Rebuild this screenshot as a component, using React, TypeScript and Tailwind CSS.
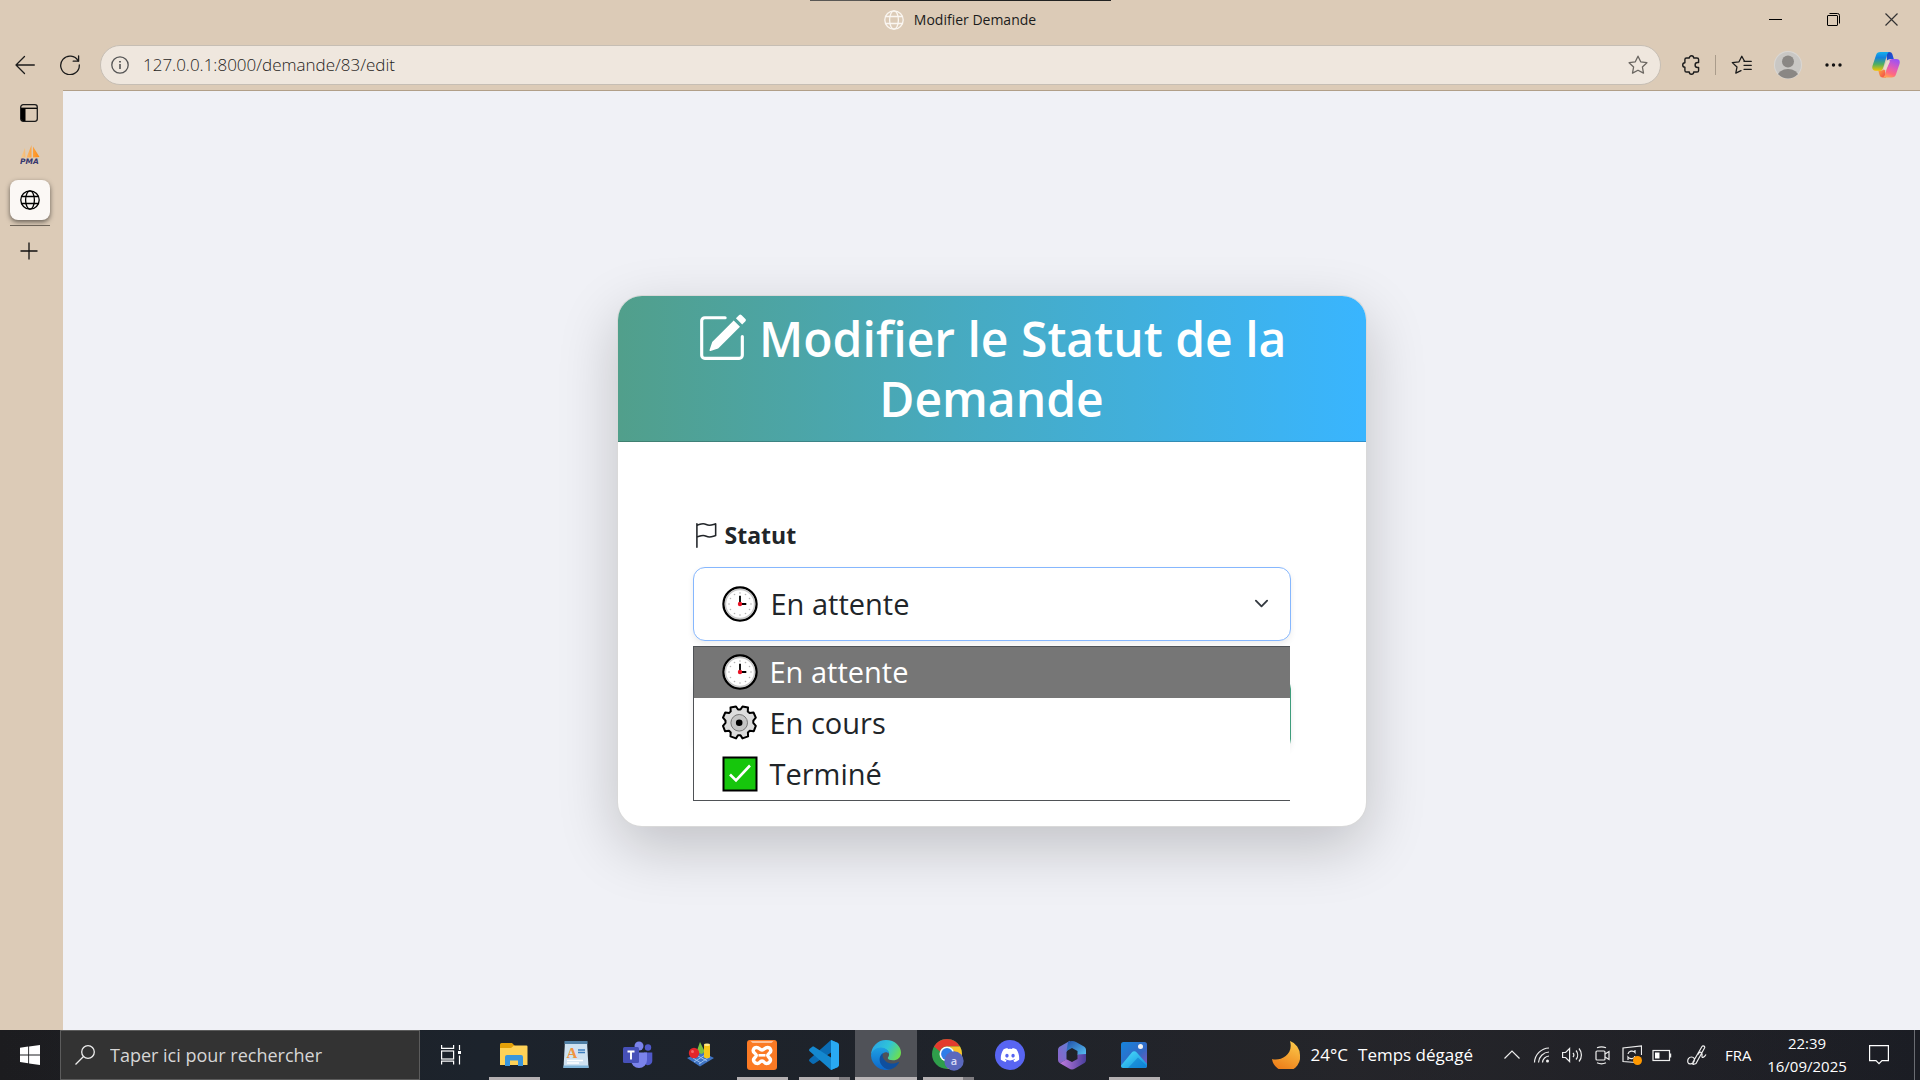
import type { ReactNode } from "react";
import { BsFlag, BsPencilSquare } from "react-icons/bs";
import { FaDiscord } from "react-icons/fa";

/* ---------- Browser icons ---------- */

function Globe({ className }: { className?: string }) {
  return (
    <svg viewBox="0 0 20 20" fill="none" stroke="currentColor" strokeWidth="1.3" className={className}>
      <circle cx="10" cy="10" r="9.2" />
      <ellipse cx="10" cy="10" rx="4.4" ry="9.2" />
      <path d="M1.5 6.5h17M1.5 13.5h17" />
    </svg>
  );
}

function BackIcon() {
  return (
    <svg viewBox="0 0 20 20" fill="none" stroke="#1b1b1b" strokeWidth="1.3" strokeLinecap="round" strokeLinejoin="round" className="size-5">
      <path d="M19.3 10H1M9.5 1.5 1 10l8.500 8.500" />
    </svg>
  );
}

function ReloadIcon() {
  return (
    <svg viewBox="0 0 20 20" fill="none" stroke="#1b1b1b" strokeWidth="1.3" strokeLinecap="round" strokeLinejoin="round" className="size-5">
      <path d="M18.2 6A9.300 9.300 0 1 0 19.300 10" />
      <path d="M18.600.8v5.400h-5.400" />
    </svg>
  );
}

function InfoIcon() {
  return (
    <svg viewBox="0 0 18 18" fill="none" stroke="#555" strokeWidth="1.3" className="size-[18px]">
      <circle cx="9" cy="9" r="8.200" />
      <path d="M9 8v5" strokeWidth="1.6" />
      <path d="M9 5v1.600" strokeWidth="1.800" />
    </svg>
  );
}

const STAR = "M10 1.200l2.700 5.600 6.200.9-4.500 4.300 1.100 6.100L10 15.200l-5.500 2.900 1.100-6.100L1.100 7.700l6.200-.9z";

function StarIcon() {
  return (
    <svg viewBox="0 0 20 20" fill="none" stroke="#6b6762" strokeWidth="1.300" strokeLinejoin="round" className="size-5">
      <path d={STAR} />
    </svg>
  );
}

function FavoritesIcon() {
  return (
    <svg viewBox="0 0 21 20" fill="none" stroke="#1b1b1b" strokeWidth="1.300" strokeLinejoin="round" strokeLinecap="round" className="h-5 w-[21px]">
      <path d="M13.500 6.300 10.800 1.200 8 6.800l-6.700.8 4.700 4.400-1.200 6.200 5.200-2.600" />
      <path d="M13 6.300h7.300M13 10.300h7.300M13 14.300h7.300" />
    </svg>
  );
}

function PuzzleIcon() {
  return (
    <svg viewBox="0 0 20 20" fill="none" stroke="#1b1b1b" strokeWidth="1.400" strokeLinejoin="round" className="size-5">
      <path d="M5.500 3H8.300a2.200 2.200 0 0 1 4.400 0H16a1.600 1.600 0 0 1 1.600 1.600V7.500h-1a2.500 2.500 0 0 0 0 5h1v2.900A1.600 1.600 0 0 1 16 17h-3.300a2.200 2.200 0 0 1-4.400 0H5.500A1.600 1.600 0 0 1 3.900 15.400v-3.200a2.200 2.200 0 0 1 0-4.400V4.600A1.600 1.600 0 0 1 5.500 3z" />
    </svg>
  );
}

function Avatar() {
  return (
    <svg viewBox="0 0 28 28" className="size-7">
      <defs>
        <clipPath id="avatarClip"><circle cx="14" cy="14" r="13.500" /></clipPath>
      </defs>
      <circle cx="14" cy="14" r="14" fill="#d9d7d4" />
      <circle cx="14" cy="14" r="13" fill="#c9c7c4" />
      <g fill="#8a8784" clipPath="url(#avatarClip)">
        <circle cx="14" cy="10.500" r="6" />
        <ellipse cx="14" cy="25.500" rx="10.500" ry="7.500" />
      </g>
    </svg>
  );
}

function CopilotIcon() {
  return (
    <svg viewBox="0 0 28 28" className="size-7">
      <defs>
        <linearGradient id="cpA" x1="0" y1="0" x2="0" y2="1">
          <stop offset="0" stopColor="#12b0ee" />
          <stop offset=".3" stopColor="#1482dc" />
          <stop offset=".65" stopColor="#4fae62" />
          <stop offset="1" stopColor="#f2c500" />
        </linearGradient>
        <linearGradient id="cpB" x1=".7" y1="0" x2=".3" y2="1">
          <stop offset="0" stopColor="#9b52f5" />
          <stop offset=".45" stopColor="#e05bb8" />
          <stop offset=".75" stopColor="#ff6a80" />
          <stop offset="1" stopColor="#ffa552" />
        </linearGradient>
        <linearGradient id="cpC" x1="0" y1="0" x2="1" y2="1">
          <stop offset="0" stopColor="#1b44b8" />
          <stop offset="1" stopColor="#2257e2" />
        </linearGradient>
        <linearGradient id="cpD" x1="0" y1="0" x2="1" y2="1">
          <stop offset="0" stopColor="#ffb03a" />
          <stop offset="1" stopColor="#f0404f" />
        </linearGradient>
      </defs>
      <path d="M14 1h3.500a3 3 0 0 1 2.800 2l1.500 5h-3.500a3 3 0 0 0-3 2.200z" fill="url(#cpC)" />
      <path d="M14 26.500h-3.500a3 3 0 0 1-2.800-2L6.300 19.500h3.200a3 3 0 0 0 3-2.200z" fill="url(#cpD)" />
      <path d="M8.500 1H18a3 3 0 0 0-2.800 2.200l-4 13.600a4 4 0 0 1-3.800 2.900H3.700c-3 0-4-2-3.200-5L4 4.300C4.700 2 6 1 8.500 1z" fill="url(#cpA)" />
      <path d="M19.500 26.500H10a3 3 0 0 0 2.800-2.200l4-13.400A4 4 0 0 1 20.600 8h3.700c3 0 4 2 3.200 5L24 23.200c-.7 2.300-2 3.300-4.500 3.300z" fill="url(#cpB)" />
      <path d="M16.300 10.500 13 17.500" stroke="#e9dccb" strokeWidth="3" strokeLinecap="round" />
    </svg>
  );
}

function TabsIcon() {
  return (
    <svg viewBox="0 0 18 18" className="size-[18px]">
      <rect x=".7" y=".7" width="16.600" height="16.600" rx="2.500" fill="none" stroke="#1b1b1b" strokeWidth="1.300" />
      <path d="M1 4.300h16" stroke="#000" strokeWidth="1.300" />
      <path d="M1 4.500h4.500V17H3a2 2 0 0 1-2-2z" fill="#000" />
    </svg>
  );
}

function PmaIcon() {
  return (
    <svg viewBox="0 0 20 20" className="size-5">
      <defs>
        <linearGradient id="sail" x1="0" y1="0" x2="1" y2="0">
          <stop offset="0" stopColor="#f5c98e" />
          <stop offset="1" stopColor="#ff8a10" />
        </linearGradient>
      </defs>
      <path d="M1 12.500 5 3l.5 9.500zM6.500 12.500 11.500 0v12.500zM13 1.500l6.500 10.500-6.500.5z" fill="url(#sail)" />
      <text x="0" y="18.800" fontFamily="'DejaVu Sans', sans-serif" fontSize="7.500" fontWeight="700" fontStyle="italic" fill="#37386e">PMA</text>
    </svg>
  );
}

/* ---------- Option icons ---------- */

function ClockIcon() {
  const ticks = Array.from({ length: 12 }, (_, i) => (i * Math.PI) / 6);
  return (
    <svg viewBox="0 0 36 36" className="size-9 shrink-0">
      <circle cx="18" cy="18" r="16.500" fill="#fff" stroke="#000" strokeWidth="2.400" />
      <circle cx="18" cy="18" r="14.600" fill="none" stroke="#c8c8c8" strokeWidth="1.600" />
      {ticks.map((a) => (
        <circle key={a} cx={18 + 11 * Math.sin(a)} cy={18 - 11 * Math.cos(a)} r=".8" fill="#b5b5b5" />
      ))}
      <path d="M18 18V9.800M18 18h6.300" stroke="#000" strokeWidth="1.800" fill="none" />
      <circle cx="18" cy="18" r="2.200" fill="#e81224" />
    </svg>
  );
}

function GearIcon() {
  return (
    <svg viewBox="0 0 36 36" className="size-9 shrink-0">
      <path
        d="M8.500 2.500 14 1.500l2 3h2.500l2-3 5.500 1-.2 3.900 1.800 1.700 3.900-.6 2.300 5.200-2.500 3v2.200l2.500 3-2 5.300-4-.4-1.900 1.700.2 3.900-5.600 2-2-3.100H16l-2 3.100-5.500-2 .2-3.900-1.700-1.700-4 .4-2-5.300 2.500-3v-2.200l-2.500-3L3.300 7.500l3.700.6 1.700-1.700z"
        fill="#dcdcdc" stroke="#000" strokeWidth="2" strokeLinejoin="round" />
      <circle cx="17.200" cy="17.800" r="8.300" fill="#c4c4c4" stroke="#777" strokeWidth="1" />
      <circle cx="17.200" cy="17.800" r="3.300" fill="#000" />
    </svg>
  );
}

function CheckIcon() {
  return (
    <svg viewBox="0 0 36 36" className="size-9 shrink-0">
      <rect x="1.500" y="1.500" width="33" height="33" fill="#16c60c" stroke="#000" strokeWidth="2" />
      <path d="m8 18.500 6 6L28 9.500" fill="none" stroke="#fff" strokeWidth="2.600" />
    </svg>
  );
}

/* ---------- Taskbar icons ---------- */

function WindowsIcon() {
  return (
    <svg viewBox="0 0 20 20" fill="#fff" className="size-5">
      <path d="M0 2.800 8.200 1.600v7.900H0zM9.100 1.500 20 0v9.500H9.100zM0 10.400h8.200v7.900L0 17.100zM9.100 10.400H20V20L9.100 18.500z" />
    </svg>
  );
}

function TaskViewIcon() {
  return (
    <svg viewBox="0 0 20 20" fill="none" stroke="#fff" strokeWidth="1.200" className="size-5">
      <path d="M.6 0v3.400h12V0M.6 19.500v-3.400h12v3.400" />
      <rect x=".6" y="6" width="12" height="8" />
      <path d="M18.500 0v5M18.500 10.500v9" />
      <path d="M17 7.500h3" strokeWidth="3" />
    </svg>
  );
}

function ExplorerIcon() {
  return (
    <svg viewBox="0 0 30 30" className="size-[30px]">
      <path d="M1 4.500A1.500 1.500 0 0 1 2.500 3H13l2.500 2.500V10H1z" fill="#e3a008" />
      <path d="M1 8h11l3-2.500h12.500A1 1 0 0 1 28.500 6.500V25H1z" fill="#ffd257" />
      <path d="M6 26V17a2 2 0 0 1 2-2h14a2 2 0 0 1 2 2v9h-5v-5.500h-8V26z" fill="#3a96dd" />
    </svg>
  );
}

function WordpadIcon() {
  return (
    <svg viewBox="0 0 30 30" className="size-[30px]">
      <path d="M4 1h22l1.500 27H2.500z" fill="#cfe2f1" />
      <path d="M3.500 1h23v3h-23z" fill="#4f7fa5" />
      <path d="M2.500 25.500h25V28h-25z" fill="#7fb4d8" />
      <text x="5.500" y="18" fontFamily="'Liberation Serif', serif" fontSize="15" fontWeight="700" fill="#ef9340">A</text>
      <path d="M17 10h7M17 12.500h7" stroke="#3f7fc0" strokeWidth="1.500" />
      <path d="M6 20.500h16M6 23h12" stroke="#fff" strokeWidth="1.400" />
    </svg>
  );
}

function TeamsIcon() {
  return (
    <svg viewBox="0 0 30 30" className="size-[30px]">
      <circle cx="16" cy="6" r="4.500" fill="#7b83eb" />
      <circle cx="25" cy="7.500" r="3.200" fill="#5059c9" />
      <path d="M21 12.500h8.300v8.500a4.500 4.500 0 0 1-8.300 2z" fill="#5059c9" />
      <path d="M8 12.500h16V20a8 8 0 0 1-16 0z" fill="#7b83eb" />
      <rect x="0" y="7" width="16" height="16" rx="1.500" fill="#4650b8" />
      <path d="M4.500 11.500h7M8 11.500v8" stroke="#fff" strokeWidth="1.900" />
    </svg>
  );
}

function ShapesIcon() {
  return (
    <svg viewBox="0 0 30 30" className="size-[30px]">
      <path d="m2 18 13 8.500L29 18l-12-6z" fill="#3f74c4" />
      <path d="m8 18 8 5M13 16l9 5M20 15 9 22M24 17l-10 7" stroke="#9cc0ee" strokeWidth="1" />
      <path d="m15 2-3.500 10 5 2 3.500-2z" fill="#79c043" />
      <path d="M19 4.500h6V17a3 1.300 0 0 1-6 0z" fill="#f6c519" />
      <ellipse cx="22" cy="4.800" rx="3" ry="1.300" fill="#ffe98a" />
      <circle cx="9" cy="13" r="5.200" fill="#e3262b" />
      <circle cx="7.500" cy="11.500" r="1.500" fill="#f46a6a" />
    </svg>
  );
}

function XamppIcon() {
  return (
    <svg viewBox="0 0 30 30" className="size-[30px]">
      <rect width="30" height="30" rx="3" fill="#fb7a24" />
      <path d="M3.500 1h23l-2 2h-19z" fill="#fdc097" />
      <g fill="none" stroke="#fff" strokeWidth="3.400" strokeLinejoin="round">
        <path d="M9.500 7.500c3 0 3 2.500 5.500 2.500s2.500-2.500 5.500-2.500 4.500 3.500 2 5.500-2.500 2.500 0 5-.5 5.500-3 5.500-2-2.500-4.500-2.500-2 2.500-4.500 2.500-5.500-3-3-5.500 2.500-3 0-5S6.500 7.500 9.500 7.500z" />
        <path d="M11.500 15.300h7" strokeWidth="2.600" />
      </g>
    </svg>
  );
}

function VsCodeIcon() {
  return (
    <svg viewBox="0 0 30 30" className="size-[30px]">
      <path d="m22 0 7 3v5L5.500 23.500c-.8.600-1.800.6-2.500 0l-2.300-2a1.700 1.700 0 0 1 0-2.500z" fill="#0a6cb4" />
      <path d="m22 30 7-3v-5L5.500 7c-.8-.6-1.800-.6-2.500 0L.7 8.800a1.700 1.700 0 0 0 0 2.500z" fill="#1488cf" />
      <path d="M22 0l6.500 2.800c1 .4 1.500 1.200 1.500 2.200v20c0 1-.5 1.800-1.500 2.200L22 30z" fill="#29a9f2" />
    </svg>
  );
}

function EdgeIcon() {
  return (
    <svg viewBox="0 0 30 30" className="size-[30px]">
      <defs>
        <linearGradient id="edA" x1="0" y1=".3" x2="1" y2=".7">
          <stop offset="0" stopColor="#2aa5e6" />
          <stop offset=".5" stopColor="#2fc4d8" />
          <stop offset="1" stopColor="#6fe04a" />
        </linearGradient>
        <linearGradient id="edB" x1="0" y1="0" x2="0" y2="1">
          <stop offset="0" stopColor="#1e9fe3" />
          <stop offset="1" stopColor="#0d66c8" />
        </linearGradient>
      </defs>
      <path d="M0 15A15 15 0 0 1 15 0c9 0 15 6.500 15 12.500 0 5-3.500 7.800-8 7.800-3 0-5.200-1-5.200-2.300 0-.9 1.300-1.500 1.300-3.800C18 11 15 9 11 8.300 6 8 1.500 11 0 15z" fill="url(#edA)" />
      <path d="M0 15.500C.5 10.500 5 7.500 10 7.500c4.500.2 8 3 8 6.200-1.200-1.400-3.500-2-5.500-.7-3.500 2.300-3 8 .5 11.500s6 4.500 6.500 4.800A15 15 0 0 1 0 15.500z" fill="url(#edB)" />
      <path d="M12 13.300c-3.500 2-4.500 6.700-2 11 2 3.500 6 5.700 9.500 5 4-1 6.800-4 8.300-6.300.4-.7-.2-1.200-.9-.8-3.500 1.800-8.500 2-12-.7-3-2.200-4-5.500-2.900-8.200z" fill="#0f4f9e" />
    </svg>
  );
}

function ChromeIcon() {
  return (
    <svg viewBox="0 0 32 32" className="size-8">
      <circle cx="15" cy="15" r="15" fill="#2f9e4b" />
      <path d="M15 0a15 15 0 0 1 13 7.500H15a7.500 7.500 0 0 0-7 5L2 7.500A15 15 0 0 1 15 0z" fill="#e33b2e" />
      <path d="M28 7.500A15 15 0 0 1 15.500 30l6-11.500A7.500 7.500 0 0 0 15 7.500z" fill="#fcc12b" />
      <circle cx="15" cy="15" r="7.500" fill="#fff" />
      <circle cx="15" cy="15" r="5.900" fill="#2f7de9" />
      <circle cx="22" cy="22" r="9.700" fill="#5a68bd" />
      <text x="22" y="25.800" textAnchor="middle" fontFamily="'Open Sans', sans-serif" fontSize="11" fontWeight="600" fill="#d7dbf5">a</text>
    </svg>
  );
}

function DiscordIcon() {
  return (
    <span className="flex size-[30px] items-center justify-center rounded-full bg-[#5865f2] text-white">
      <FaDiscord className="size-5" />
    </span>
  );
}

function M365Icon() {
  return (
    <svg viewBox="0 0 30 30" className="size-[30px]">
      <defs>
        <linearGradient id="mA" x1="0" y1="1" x2="1" y2="0">
          <stop offset="0" stopColor="#8e62c8" />
          <stop offset="1" stopColor="#5f7fd6" />
        </linearGradient>
        <linearGradient id="mB" x1="0" y1="0" x2="1" y2="1">
          <stop offset="0" stopColor="#1f4fa8" />
          <stop offset="1" stopColor="#5cc7f7" />
        </linearGradient>
        <linearGradient id="mC" x1="0" y1="0" x2="1" y2="0">
          <stop offset="0" stopColor="#c07be0" />
          <stop offset="1" stopColor="#4a3f9c" />
        </linearGradient>
      </defs>
      <path d="M1 10c0-1.500.8-2.700 2-3.400L13 .8 11 9.500 9.500 12v7.500L3 23.300A4 4 0 0 1 1 20z" fill="url(#mA)" />
      <path d="M11 2c2.500-1.500 5.500-1.500 8 0l8 4.600c1.300.8 2 2 2 3.400v7l-8.500-2v-4L15 8l-5.500 3z" fill="url(#mB)" />
      <path d="M29 14v6c0 1.500-.8 2.600-2 3.300l-9 5.300a6 6 0 0 1-6 0l-9-5.300 6.500-4L15 22l5.500-3v-4.500z" fill="url(#mC)" />
    </svg>
  );
}

function PhotosIcon() {
  return (
    <svg viewBox="0 0 26 26" className="size-[26px]">
      <defs>
        <linearGradient id="phA" x1="0" y1="0" x2="1" y2="1">
          <stop offset="0" stopColor="#1585dc" />
          <stop offset=".6" stopColor="#3568c4" />
          <stop offset="1" stopColor="#8a55b8" />
        </linearGradient>
        <linearGradient id="phB" x1="0" y1="0" x2="1" y2="1">
          <stop offset="0" stopColor="#4fe0fb" />
          <stop offset="1" stopColor="#0f8fe0" />
        </linearGradient>
      </defs>
      <rect width="26" height="26" rx="2.500" fill="url(#phA)" />
      <path d="M0 23.500 11 10.300a3 3 0 0 1 4.500 0L26 22v1.500a2.500 2.500 0 0 1-2.500 2.500h-21A2.500 2.500 0 0 1 0 23.500z" fill="url(#phB)" />
      <path d="m7 26 10-10.500L26 24a2.500 2.500 0 0 1-2.500 2z" fill="#0c74cc" opacity=".55" />
      <circle cx="19.500" cy="4.500" r="2.500" fill="#f3f3f3" />
    </svg>
  );
}

function MoonIcon() {
  return (
    <svg viewBox="0 0 28 28" className="size-7">
      <defs>
        <linearGradient id="moon" x1=".7" y1="0" x2=".3" y2="1">
          <stop offset="0" stopColor="#fbc648" />
          <stop offset="1" stopColor="#ec7a17" />
        </linearGradient>
      </defs>
      <path d="M18 0A15 15 0 0 1 28 14a14 14 0 0 1-28 4C8 20.500 22 14 18 0z" fill="url(#moon)" />
    </svg>
  );
}

function TrayIcon({ children, className = "w-[30px]" }: { children: ReactNode; className?: string }) {
  return (
    <button type="button" className={`flex h-full items-center justify-center ${className}`}>
      <svg viewBox="0 0 20 20" fill="none" stroke="#eee" strokeWidth="1.200" className="size-5">
        {children}
      </svg>
    </button>
  );
}

/* ---------- Layout ---------- */

const OPTIONS = [
  { label: "En attente", icon: <ClockIcon />, selected: true },
  { label: "En cours", icon: <GearIcon />, selected: false },
  { label: "Terminé", icon: <CheckIcon />, selected: false },
];

type TaskbarApp = { name: string; icon: ReactNode; state: "idle" | "open" | "active" | "stacked" };

const APPS: TaskbarApp[] = [
  { name: "Explorateur de fichiers", icon: <ExplorerIcon />, state: "open" },
  { name: "WordPad", icon: <WordpadIcon />, state: "idle" },
  { name: "Microsoft Teams", icon: <TeamsIcon />, state: "idle" },
  { name: "Formes", icon: <ShapesIcon />, state: "idle" },
  { name: "XAMPP", icon: <XamppIcon />, state: "open" },
  { name: "Visual Studio Code", icon: <VsCodeIcon />, state: "stacked" },
  { name: "Microsoft Edge", icon: <EdgeIcon />, state: "active" },
  { name: "Google Chrome", icon: <ChromeIcon />, state: "stacked" },
  { name: "Discord", icon: <DiscordIcon />, state: "idle" },
  { name: "Microsoft 365", icon: <M365Icon />, state: "idle" },
  { name: "Photos", icon: <PhotosIcon />, state: "open" },
];

function TitleBar() {
  return (
    <div className="grid h-10 grid-cols-[1fr_auto_1fr]">
      <div />
      <div className="flex w-[301px] flex-col">
        <div className="flex h-px">
          <div className="w-[60px] bg-[#5a5855]" />
          <div className="flex-1 bg-[#222]" />
        </div>
        <div className="flex h-[38px] items-center justify-center gap-[10px] text-sm text-[#1b1b1b]">
          <Globe className="size-5 text-[#faf6f1]" />
          <h1>Modifier Demande</h1>
        </div>
      </div>
      <div className="flex h-[38px] justify-end">
        <button type="button" aria-label="Réduire" className="flex w-[58px] items-center justify-center">
          <span className="h-px w-[13px] bg-black" />
        </button>
        <button type="button" aria-label="Restaurer" className="flex w-[58px] items-center justify-center">
          <svg viewBox="0 0 13 13" fill="none" stroke="#000" className="size-[13px]">
            <rect x=".5" y="2.500" width="10" height="10" rx=".5" />
            <path d="M2.500.5h8a2 2 0 0 1 2 2v8" />
          </svg>
        </button>
        <button type="button" aria-label="Fermer" className="flex w-[58px] items-center justify-center">
          <svg viewBox="0 0 13 13" stroke="#333" strokeWidth="1.200" className="size-[13px]">
            <path d="M.5.5l12 12M12.500.5l-12 12" />
          </svg>
        </button>
      </div>
    </div>
  );
}

function Toolbar() {
  return (
    <div className="flex h-[50px] items-center pl-[2px] pr-3">
      <button type="button" aria-label="Précédent" className="flex w-[46px] justify-center"><BackIcon /></button>
      <button type="button" aria-label="Actualiser" className="flex w-[44px] justify-center"><ReloadIcon /></button>
      <div className="ml-2 flex h-10 flex-1 items-center rounded-full border border-[#c6beb4] bg-[#efe7de] pl-[10px] pr-3">
        <InfoIcon />
        <input
          type="text"
          aria-label="Adresse"
          defaultValue="127.0.0.1:8000/demande/83/edit"
          className="ml-[14px] flex-1 bg-transparent text-[17px] font-light text-[#1f1d1b] outline-none"
        />
        <button type="button" aria-label="Ajouter aux favoris"><StarIcon /></button>
      </div>
      <div className="ml-[7px] flex items-center">
        <button type="button" aria-label="Extensions" className="flex w-[46px] justify-center"><PuzzleIcon /></button>
        <div className="mx-px h-5 w-px bg-[#aa9c8b]" />
        <button type="button" aria-label="Favoris" className="flex w-[49px] justify-center"><FavoritesIcon /></button>
        <button type="button" aria-label="Profil" className="flex w-[44px] justify-center"><Avatar /></button>
        <button type="button" aria-label="Paramètres et plus" className="flex w-[46px] justify-center">
          <svg viewBox="0 0 17 4" fill="#111" className="h-1 w-[17px]">
            <circle cx="2" cy="2" r="1.700" /><circle cx="8.500" cy="2" r="1.700" /><circle cx="15" cy="2" r="1.700" />
          </svg>
        </button>
        <button type="button" aria-label="Copilot" className="ml-2 flex w-[44px] justify-center"><CopilotIcon /></button>
      </div>
    </div>
  );
}

function TabRail() {
  return (
    <aside className="flex w-[63px] shrink-0 flex-col items-start pl-[10px] pt-1">
      <button type="button" aria-label="Menu des onglets" className="flex size-[38px] items-center justify-center"><TabsIcon /></button>
      <button type="button" aria-label="phpMyAdmin" className="mt-[3px] flex size-10 items-center justify-center"><PmaIcon /></button>
      <button type="button" aria-label="Modifier Demande" className="mt-[5px] flex size-10 items-center justify-center rounded-lg bg-[#fbf8f5] shadow-[0_2px_5px_rgba(0,0,0,0.55)]">
        <Globe className="size-5 text-black" />
      </button>
      <div className="mt-[5px] h-px w-10 bg-[#6e6458]" />
      <button type="button" aria-label="Nouvel onglet" className="mt-[5px] flex h-10 w-[38px] items-center justify-center">
        <svg viewBox="0 0 18 18" stroke="#111" strokeWidth="1.300" className="size-[18px]"><path d="M9 .5v17M.5 9h17" /></svg>
      </button>
    </aside>
  );
}

function StatusCard() {
  return (
    <section className="w-full max-w-[750px] rounded-[25px] border border-black/15 bg-white shadow-[0_20px_60px_rgba(0,0,0,0.2)]">
      <header className="rounded-t-3xl border-b border-black/20 bg-linear-to-r from-[#519f8b] to-[#39b5ff] px-5 pt-[13px] pb-3 text-center">
        <h2 className="text-5xl leading-[60px] font-semibold text-white">
          <BsPencilSquare className="inline-block size-[50px] align-[-6px]" /> Modifier le Statut de la Demande
        </h2>
      </header>
      <form className="p-[75px] text-[#212529]" onSubmit={(e) => e.preventDefault()}>
        <label htmlFor="statut" className="mb-3 flex h-[38px] items-center gap-[7px] text-[23px] font-bold">
          <BsFlag className="size-[25px]" />
          Statut
        </label>
        <div className="relative flex items-center">
          <select
            id="statut"
            defaultValue="En attente"
            className="h-[74px] w-full appearance-none rounded-xl border border-[#86b7fe] bg-white pl-[77px] text-[29px] shadow-[0_3px_6px_rgba(0,0,0,0.075)] outline-none"
          >
            {OPTIONS.map((o) => (
              <option key={o.label}>{o.label}</option>
            ))}
          </select>
          <span className="pointer-events-none absolute left-[29px]"><ClockIcon /></span>
          <svg viewBox="0 0 16 16" fill="none" stroke="#343a40" strokeWidth="2" strokeLinecap="round" strokeLinejoin="round" className="pointer-events-none absolute right-[22px] size-[15px]">
            <path d="m2 5 6 6 6-6" />
          </svg>
          <ul role="listbox" aria-label="Statut" className="absolute top-full left-0 z-10 mt-[5px] w-[calc(100%-1px)] border-y border-l border-[#4f5256] bg-white">
            {OPTIONS.map((o) => (
              <li
                key={o.label}
                role="option"
                aria-selected={o.selected}
                className={
                  o.selected
                    ? "flex h-[51px] items-center gap-3 bg-[#767676] pl-7 text-[29px] text-white"
                    : "flex h-[51px] items-center gap-3 pl-7 text-[29px]"
                }
              >
                {o.icon}
                {o.label}
              </li>
            ))}
          </ul>
        </div>
        <button
          type="submit"
          aria-label="Enregistrer"
          className="mt-9 block h-[74px] w-full rounded-xl border border-[#3f9d7c] bg-white shadow-[0_3px_6px_rgba(0,0,0,0.075)]"
        />
      </form>
    </section>
  );
}

function AppButton({ app }: { app: TaskbarApp }) {
  return (
    <button
      type="button"
      aria-label={app.name}
      className={app.state === "active" ? "flex h-full w-[62px] flex-col items-center bg-[#505258]" : "flex h-full w-[62px] flex-col items-center"}
    >
      <span className="flex h-[47px] items-center pt-[3px]">{app.icon}</span>
      {app.state === "open" && <span className="h-[3px] w-[51px] bg-[#b4b0b2]" />}
      {app.state === "active" && <span className="h-[3px] w-full bg-[#b9b5b7]" />}
      {app.state === "stacked" && (
        <span className="flex h-[3px] w-[51px]">
          <span className="flex-1 bg-[#b4b0b2]" />
          <span className="w-[11px] bg-[#7e7c80]" />
        </span>
      )}
    </button>
  );
}

function Taskbar() {
  return (
    <footer className="flex h-[50px] shrink-0 items-center bg-linear-to-r from-[#1c1c1f] via-[#2a2628] via-70% to-[#1b1d24] text-white">
      <div className="flex h-full w-full items-center bg-linear-to-r from-transparent via-[#1c232c] via-25% to-transparent">
        <button type="button" aria-label="Démarrer" className="flex w-[60px] justify-center"><WindowsIcon /></button>
        <div className="flex h-full w-[360px] items-center border border-[#5c5c5c] bg-[#333]">
          <svg viewBox="0 0 20 20" fill="none" stroke="#eee" strokeWidth="1.300" className="ml-[14px] size-5">
            <circle cx="13" cy="7" r="6.300" /><path d="M8.500 11.500.5 19.500" />
          </svg>
          <input
            type="search"
            aria-label="Rechercher"
            placeholder="Taper ici pour rechercher"
            className="ml-[15px] w-[280px] bg-transparent text-lg outline-none placeholder:text-[#d6d6d6]"
          />
        </div>
        <button type="button" aria-label="Affichage des tâches" className="flex w-[62px] justify-center"><TaskViewIcon /></button>
        <div className="ml-px flex h-full">
          {APPS.map((a) => <AppButton key={a.name} app={a} />)}
        </div>
        <div className="ml-auto flex h-full items-center">
          <MoonIcon />
          <span className="ml-[11px] text-[17px]">24°C</span>
          <span className="ml-[10px] text-[17px]">Temps dégagé</span>
          <div className="ml-6 flex h-full">
            <TrayIcon><path d="m2.500 13.500 7.500-7.500 7.500 7.500" /></TrayIcon>
            <TrayIcon>
              <path d="M2.500 17.500A15 15 0 0 1 17 3M6.500 17.500A11 11 0 0 1 17 7M10.500 17.500A7 7 0 0 1 17 11" />
              <circle cx="15.500" cy="16" r="1.500" fill="#eee" stroke="none" />
            </TrayIcon>
            <TrayIcon>
              <path d="M.6 7.500h3l4-4v13l-4-4h-3zM11 8a3 3 0 0 1 0 4M14 5.500a7 7 0 0 1 0 9M17 3.500a10 10 0 0 1 0 13" />
            </TrayIcon>
            <TrayIcon>
              <rect x="4" y="6" width="9" height="9" rx="1" />
              <path d="m13 9 4-2.500v8L13 12M5 2.800c3-1.300 6-1.300 9 0M5 17.800c3 1.300 6 1.300 9 0" />
            </TrayIcon>
            <TrayIcon>
              <path d="M14 17.500 1 16.500V3L19.500 1v9M6 9c.5-3 5-4 7-1.500V5M13 11c-.5 3-5 3.500-7 1V15" />
              <circle cx="15.500" cy="15.500" r="4.500" fill="#ff9800" stroke="none" />
            </TrayIcon>
            <TrayIcon>
              <rect x="1" y="5.500" width="16.500" height="10" />
              <path d="M3 7.500h4.500v6H3z" fill="#fff" stroke="none" />
              <path d="M18.600 8.500v4" />
            </TrayIcon>
            <TrayIcon className="w-10">
              <path d="M1 17.500c-1-3 1-5.500 3.500-5.500s3.500 2 2.500 4.500-5 3.500-6 1M6 17 15 1.500c1-1.500 3.500 0 2.500 1.500L9 18.500l-3 1zM11 9.500c2-4 4.500-2 4 1s2 2.500 4-1" />
            </TrayIcon>
          </div>
          <span className="ml-2 w-[30px] text-[15px]">FRA</span>
          <div className="ml-1 w-[96px] text-center text-[15px] leading-[23px]">
            <div>22:39</div>
            <div>16/09/2025</div>
          </div>
          <button type="button" aria-label="Notifications" className="flex w-12 justify-center">
            <svg viewBox="0 0 20 20" fill="none" stroke="#fff" strokeWidth="1.200" className="size-5">
              <path d="M.6.600h18.800v15H13l-3 3-3-3H.6z" />
            </svg>
          </button>
          <div className="ml-[11px] mr-[5px] h-full w-px bg-[#6a6c72]" />
        </div>
      </div>
    </footer>
  );
}

export default function App() {
  return (
    <div className="flex min-h-screen flex-col bg-[#dccbb7] font-['Open_Sans','Noto_Sans',sans-serif]">
      <TitleBar />
      <Toolbar />
      <div className="flex flex-1">
        <TabRail />
        <main className="flex flex-1 items-center justify-center border-t border-[#b19f88] bg-[#f0f1f6]">
          <StatusCard />
        </main>
      </div>
      <Taskbar />
    </div>
  );
}
